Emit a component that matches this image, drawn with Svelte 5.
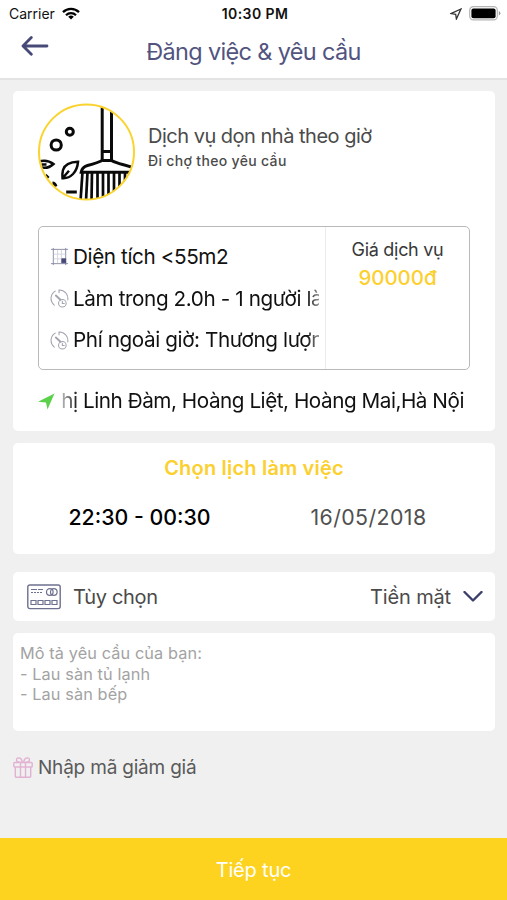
<script>
  const details = [
    { icon: 'area', text: 'Diện tích <55m2', cut: false },
    { icon: 'clock', text: 'Làm trong 2.0h - 1 người làm', cut: true },
    { icon: 'clock', text: 'Phí ngoài giờ: Thương lượng', cut: true },
  ];
  const bristles = [
    [45, 43], [50, 48.5], [54.5, 54], [60, 60], [65.5, 65.5], [71, 71], [76.5, 76.5], [82, 82], [87.5, 87.5], [93, 93],
  ];

  let note = $state('');
  const address = 'thị Linh Đàm, Hoàng Liệt, Hoàng Mai,Hà Nội';
</script>

<div class="screen">
  <div class="status">
    <div class="carrier">
      <span>Carrier</span>
      <svg width="18" height="13" viewBox="0 0 18 13" fill="none" stroke="#000" stroke-width="2.3">
        <path d="M1 5.1a11.3 11.3 0 0 1 16 0" />
        <path d="M4 8.2a7.1 7.1 0 0 1 10 0" />
        <path d="M9 12.6 6.2 9.8a4 4 0 0 1 5.6 0z" fill="#000" stroke="none" />
      </svg>
    </div>
    <b class="time">10:30 PM</b>
    <div class="power">
      <svg width="12" height="12" viewBox="0 0 12 12" fill="none" stroke="#333" stroke-width="1.3">
        <path d="M10.9 1 1 5.6l4.7.7.7 4.7z" />
      </svg>
      <svg width="32" height="15" viewBox="0 0 32 15">
        <rect x=".7" y=".7" width="27.6" height="13.2" rx="3.6" fill="#fff" stroke="#b5b5b5" stroke-width="1.2" />
        <rect x="2.4" y="2.4" width="24.2" height="9.8" rx="2" fill="#000" />
        <path d="M29.8 5v4.6q1.6-.8 1.6-2.3T29.8 5z" fill="#999" />
      </svg>
    </div>
  </div>

  <header>
    <button class="back" aria-label="Quay lại">
      <svg width="28" height="20" viewBox="0 0 28 20" fill="none" stroke="#474a78" stroke-width="2.8" stroke-linecap="round" stroke-linejoin="round">
        <path d="M26 10H2M10.3 1.6 2 10l8.3 8.2" />
      </svg>
    </button>
    <h1>Đăng việc &amp; yêu cầu</h1>
  </header>

  <main>
    <section class="card service">
      <div class="intro">
        <svg width="98" height="98" viewBox="0.5 0 98 98" fill="none" stroke="#0a0a0a" stroke-width="3">
          <defs><clipPath id="disc"><circle cx="49" cy="49" r="48" /></clipPath></defs>
          <g clip-path="url(#disc)">
            <path d="M64.7 0v58M74 0v58M64.7 48.5H74M64.7 57.5H74" />
            <path d="M64.7 57.5Q61 59.500 50 62.500 44.500 64 43.700 69.300H98M74 57.500Q78 60 98 65" />
            {#each bristles as [top, bottom]}
              <path d="M{top} 69L{bottom} 98" stroke-width="2.7" />
            {/each}
            <circle cx="32.3" cy="28.7" r="3.5" />
            <circle cx="18.7" cy="42" r="5.1" />
            <path d="M40.5 58.8Q28 59 25.500 67 24.500 71 25 75.200 31 75.600 35.500 71 40 66 40.500 58.800zM25 75.200l6.500-7.500" stroke-width="2.5" />
            <path d="M0 59Q9 55.500 16 61 9 67.500 0 63M4 61.500h5" stroke-width="2.5" />
            <path d="M8 72l3 3M15 80q2.500 0 3.500 3.500M28.700 88.900h10.600" />
          </g>
          <circle cx="49" cy="49" r="47.500" stroke="#fbd32e" stroke-width="2" />
        </svg>
        <div class="names">
          <h2>Dịch vụ dọn nhà theo giờ</h2>
          <p>Đi chợ theo yêu cầu</p>
        </div>
      </div>

      <div class="summary">
        <ul>
          {#each details as d}
            <li>
              {#if d.icon === 'area'}
                <svg width="19" height="19" viewBox="0 0 20 20" fill="none" stroke="#8a8ca6" stroke-width="1">
                  <path d="M1 2.500h18M1 17.500h18M3.500 1v18M16.500 1v18" />
                  <path d="M8 3v14M12 3v14M4 7.500h12M4 12.500h12" stroke="#d3d4de" />
                  <rect x="12.500" y="12.500" width="4" height="4" fill="#474a78" stroke="#474a78" />
                </svg>
              {:else}
                <svg width="19" height="19" viewBox="0 0 20 20" fill="none" stroke="#a2a4af" stroke-width="1.100" stroke-linecap="round">
                  <path d="M9.500 4V1A9 9 0 0 1 18.700 11.500M5.500 2.200A9 9 0 0 0 4.500 17" />
                  <path d="M6.200 6.800l4.800 4.500" stroke-width="2" />
                  <circle cx="13" cy="15" r="4" /><path d="M13 13v2.300h2" />
                </svg>
              {/if}
              <span class="clip" class:cut={d.cut}>{d.text}</span>
            </li>
          {/each}
        </ul>
        <div class="price">
          <span>Giá dịch vụ</span>
          <strong>90000đ</strong>
        </div>
      </div>

      <div class="address">
        <svg width="17" height="17" viewBox="0 0 17 17"><path d="M16.500.5 0 8.800l8 .8 1.500 7z" fill="#5bd04a" /></svg>
        <div class="marquee"><span>{address}</span></div>
      </div>
    </section>

    <section class="card schedule">
      <h3>Chọn lịch làm việc</h3>
      <div class="slots">
        <span class="hours">22:30 - 00:30</span>
        <span class="date">16/05/2018</span>
      </div>
    </section>

    <section class="card payment">
      <svg width="34" height="26" viewBox="0 0 34 26" fill="none" stroke="#6d7090" stroke-width="1.200">
        <rect x=".8" y="1" width="32.400" height="23.600" rx="2" stroke-width="1.400" />
        <path d="M4 5.500h6M11 5.500h5M4 8.500h2M7 8.500h2M10 8.500h2M13 8.500h2" stroke-width="1" />
        <circle cx="22.800" cy="8" r="3.300" /><circle cx="26.800" cy="8" r="3.300" />
        <path d="M4 16.500h5v4H4zM11 16.500h5v4h-5zM18 16.500h5v4h-5zM25 16.500h5v4h-5z" />
      </svg>
      <span class="option">Tùy chọn</span>
      <span class="method">Tiền mặt</span>
      <svg width="20" height="12" viewBox="0 0 20 12" fill="none" stroke="#3b3f6b" stroke-width="2.400" stroke-linecap="round" stroke-linejoin="round">
        <path d="M1.500 1 10 9.500 18.500 1" />
      </svg>
    </section>

    <textarea class="card note" bind:value={note} placeholder={'Mô tả yêu cầu của bạn:\n- Lau sàn tủ lạnh\n- Lau sàn bếp'}></textarea>

    <div class="coupon">
      <svg width="20" height="21" viewBox="0 0 20 21" fill="none" stroke="#e2b2d3" stroke-width="1.400">
        <rect x=".8" y="5.500" width="18.400" height="4.500" rx=".8" />
        <path d="M2.300 10v9.500q0 .7.700.7h14q.700 0 .700-.7V10M7.500 5.500v14.700M12.500 5.500v14.700M9 5.500Q3.500 5.500 3.500 3T6 1Q8.500 1 9.300 5M11 5.500Q16.500 5.500 16.500 3T14 1Q11.500 1 10.700 5" />
      </svg>
      <span>Nhập mã giảm giá</span>
    </div>
  </main>

  <button class="next">Tiếp tục</button>
</div>

<style>
  :global(body) { margin: 0; background: #f0f0f0; }
  .screen {
    width: 507px; height: 900px; display: flex; flex-direction: column; overflow: hidden;
    background: #f0f0f0; color: #111; font-family: Inter, "Liberation Sans", sans-serif;
  }
  svg { display: block; flex: none; }
  h1, h2, h3, p, ul { margin: 0; padding: 0; font-weight: 400; }
  button { border: 0; padding: 0; font: inherit; cursor: pointer; }
  span, strong, h1, h2, h3, p { white-space: nowrap; }

  .status {
    height: 27px; box-sizing: border-box; padding: 0 6px 0 9px; background: #fff;
    display: grid; grid-template-columns: 1fr auto 1fr; align-items: center; font-size: 14px;
  }
  .carrier, .power { display: flex; align-items: center; }
  .carrier { gap: 7px; }
  .power { justify-content: flex-end; gap: 7px; }
  .time { font-size: 14px; font-weight: 600; letter-spacing: .4px; }

  header {
    height: 51px; background: #fff; border-bottom: 2px solid #e3e3e3;
    display: grid; grid-template-columns: 60px 1fr 60px;
  }
  .back { background: none; padding: 9px 0 0 21px; align-self: start; }
  h1 { text-align: center; font-size: 23.5px; line-height: 49px; color: #52547f; letter-spacing: -.67px; }

  main { flex: 1; padding: 11px 12px 0 13px; display: flex; flex-direction: column; }
  .card { background: #fff; border-radius: 5px; box-sizing: border-box; flex: none; }

  .service { height: 340px; padding: 12px 25px 0; }
  .intro { display: flex; gap: 12px; }
  .names { padding-top: 19px; color: #4b4b4b; }
  h2 { font-size: 20px; line-height: 28px; letter-spacing: -.5px; }
  .names p { font-size: 14px; line-height: 22px; font-weight: 500; letter-spacing: .33px; }

  .summary {
    margin-top: 25px; height: 144px; box-sizing: border-box; border: 1.5px solid #b9b9b9; border-radius: 5px;
    display: grid; grid-template-columns: 287px 1fr;
  }
  ul { list-style: none; padding: 9px 6px 0 11px; border-right: 1px solid #ececec; }
  li { height: 41.7px; display: flex; align-items: center; gap: 4px; }
  .clip { flex: 1; min-width: 0; overflow: hidden; font-size: 20.7px; line-height: 30px; letter-spacing: -.4px; }
  .cut { mask-image: linear-gradient(90deg, #000 95%, rgba(0, 0, 0, .45)); }
  .price {
    padding-top: 9px; display: flex; flex-direction: column; align-items: center;
    color: #383838; font-size: 18px; line-height: 28px; letter-spacing: -.3px;
  }
  .price strong { font-size: 20.5px; font-weight: 500; color: #fbd02f; letter-spacing: -.1px; }

  .address { display: flex; align-items: center; gap: 7px; height: 30px; margin-top: 16px; }
  .marquee {
    flex: 1; min-width: 0; display: flex; justify-content: flex-end; overflow: hidden; padding-right: 6px;
    font-size: 20.7px; line-height: 30px; letter-spacing: -.46px;
    mask-image: linear-gradient(90deg, rgba(0, 0, 0, .3), #000 16px);
  }

  .schedule { height: 111px; margin-top: 12px; padding-top: 11px; text-align: center; }
  h3 { font-size: 20px; font-weight: 600; line-height: 28px; color: #fbd02f; letter-spacing: .2px; }
  .slots { display: grid; grid-template-columns: 253px 1fr; margin-top: 21px; font-size: 21.3px; line-height: 29px; }
  .hours { color: #000; font-weight: 500; }
  .date { color: #505050; padding-right: 24px; letter-spacing: .43px; }

  .payment {
    height: 49px; margin-top: 18px; padding: 0 12px 0 14px; display: flex; align-items: center;
    color: #4a4a4a; font-size: 20px; letter-spacing: -.3px;
  }
  .option { margin-left: 12px; }
  .method { margin: 0 12px 0 auto; letter-spacing: -.15px; }

  .note {
    display: block; width: 100%; height: 98px; margin: 12px 0 0; padding: 10px 7px; border: 0; outline: none; resize: none;
    font: 16.3px/20.5px Inter, "Liberation Sans", sans-serif; letter-spacing: .1px; color: #4a4a4a;
  }
  .note::placeholder { color: #a3a3a3; opacity: 1; }

  .coupon {
    display: flex; align-items: center; gap: 5px; height: 30px; margin-top: 21px;
    color: #5a5a5a; font-size: 19px; letter-spacing: -.2px;
  }

  .next { height: 62px; flex: none; background: #fdd320; color: #fff; font-size: 20px; padding-top: 2px; letter-spacing: -.2px; }
</style>
